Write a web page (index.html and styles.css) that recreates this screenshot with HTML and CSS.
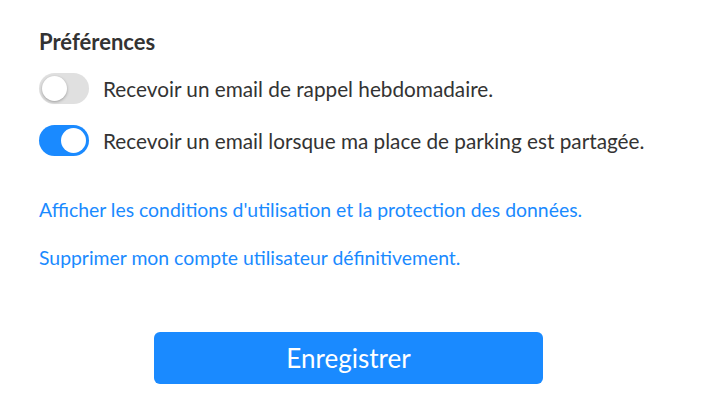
FILE: index.html
```html
<!DOCTYPE html>
<html lang="fr">
<head>
  <meta charset="UTF-8">
  <title>Préférences</title>
  <meta name="viewport" content="width=device-width, initial-scale=1">
  <link rel="stylesheet" href="styles.css">
</head>
<body>
  <div class="container">
    <h2 class="section-title">Préférences</h2>

    <label class="pref-row">
      <input type="checkbox" class="toggle-input">
      <span class="toggle"></span>
      <span class="pref-label">Recevoir un email de rappel hebdomadaire.</span>
    </label>

    <label class="pref-row">
      <input type="checkbox" class="toggle-input" checked>
      <span class="toggle"></span>
      <span class="pref-label">Recevoir un email lorsque ma place de parking est partagée.</span>
    </label>

    <div class="links">
      <a href="#" class="link">Afficher les conditions d'utilisation et la protection des données.</a>
      <a href="#" class="link">Supprimer mon compte utilisateur définitivement.</a>
    </div>

    <div class="actions">
      <button class="save-btn">Enregistrer</button>
    </div>
  </div>
</body>
</html>
```

FILE: styles.css
```css
body {
  font-family: Lato, 'Open Sans', Arial, sans-serif;
  background: #fff;
  margin: 0;
  padding: 0;
  color: #333;
}
.container {
  padding: 28px 58px 0 39px;
}
.section-title {
  font-size: 22px;
  font-weight: bold;
  margin: 0 0 17px 0;
  line-height: 28px;
}
.pref-row {
  display: flex;
  align-items: center;
  gap: 14px;
  height: 31px;
  margin-bottom: 21px;
  cursor: pointer;
}
.toggle-input {
  display: none;
}
.toggle {
  position: relative;
  flex: 0 0 auto;
  width: 50px;
  height: 31px;
  border-radius: 16px;
  background: #e0e0e0;
  transition: background 0.2s;
}
.toggle::after {
  content: '';
  position: absolute;
  top: 3px;
  left: 3px;
  width: 25px;
  height: 25px;
  border-radius: 50%;
  background: #fff;
  box-shadow: 0 1px 3px rgba(0,0,0,0.3);
  transition: left 0.2s;
}
.toggle-input:checked + .toggle {
  background: #1a8aff;
}
.toggle-input:checked + .toggle::after {
  left: 22px;
  box-shadow: none;
}
.pref-label {
  font-size: 20.75px;
}
.links {
  display: flex;
  flex-direction: column;
  align-items: flex-start;
  gap: 25px;
  margin-top: 42px;
}
.link {
  color: #1a8aff;
  text-decoration: none;
  font-size: 19.4px;
}
.actions {
  display: flex;
  justify-content: center;
  margin-top: 63px;
}
.save-btn {
  width: 389px;
  height: 52px;
  background: #1a8aff;
  color: #fff;
  border: none;
  border-radius: 6px;
  font-family: inherit;
  font-size: 26px;
  cursor: pointer;
}
```
